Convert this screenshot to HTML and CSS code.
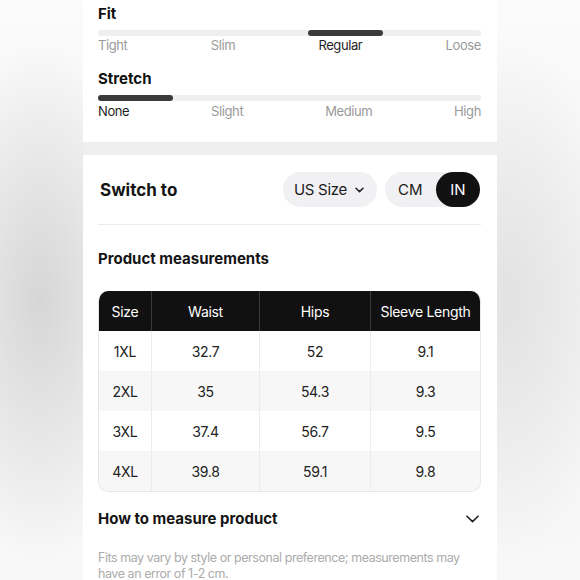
FILE: index.html
```html
<!DOCTYPE html>
<html lang="en">
<head>
<meta charset="utf-8">
<title>Size guide</title>
<link rel="stylesheet" href="styles.css">
</head>
<body>
<div class="panel">
  <section class="attrs">
    <div class="attr">
      <h3 class="attr-title">Fit</h3>
      <div class="track"><div class="track-fill" style="margin-left:54.8%;width:19.6%"></div></div>
      <div class="scale"><span>Tight</span><span>Slim</span><span class="on">Regular</span><span>Loose</span></div>
    </div>
    <div class="attr attr-second">
      <h3 class="attr-title">Stretch</h3>
      <div class="track"><div class="track-fill" style="margin-left:0;width:19.6%"></div></div>
      <div class="scale"><span class="on">None</span><span>Slight</span><span>Medium</span><span>High</span></div>
    </div>
  </section>
  <div class="strip"></div>
  <section class="card">
    <div class="switch-row">
      <h2 class="switch-title">Switch to</h2>
      <div class="controls">
        <button class="pill select">US Size
          <svg class="caret" width="9" height="6" viewBox="0 0 9 6"><path d="M1 1.2 L4.5 4.6 L8 1.2" fill="none" stroke="#222" stroke-width="1.5" stroke-linecap="round" stroke-linejoin="round"/></svg>
        </button>
        <div class="toggle">
          <span class="opt">CM</span>
          <span class="opt active">IN</span>
        </div>
      </div>
    </div>
    <div class="divider"></div>
    <h3 class="sub-title">Product measurements</h3>
    <div class="table">
      <div class="th">Size</div><div class="th">Waist</div><div class="th">Hips</div><div class="th">Sleeve Length</div>
      <div class="td">1XL</div><div class="td">32.7</div><div class="td">52</div><div class="td">9.1</div>
      <div class="td alt">2XL</div><div class="td alt">35</div><div class="td alt">54.3</div><div class="td alt">9.3</div>
      <div class="td">3XL</div><div class="td">37.4</div><div class="td">56.7</div><div class="td">9.5</div>
      <div class="td alt">4XL</div><div class="td alt">39.8</div><div class="td alt">59.1</div><div class="td alt">9.8</div>
    </div>
    <div class="measure-row">
      <h3 class="sub-title">How to measure product</h3>
      <svg class="chev" width="13" height="8" viewBox="0 0 13 8"><path d="M1 1.2 L6.5 6.6 L12 1.2" fill="none" stroke="#222" stroke-width="1.6" stroke-linecap="round" stroke-linejoin="round"/></svg>
    </div>
    <p class="note">Fits may vary by style or personal preference; measurements may have an error of 1-2 cm.</p>
  </section>
</div>
</body>
</html>
```

FILE: styles.css
```css
* { box-sizing: border-box; }

html, body {
  margin: 0;
  padding: 0;
  height: 100%;
}

body {
  font-family: Inter, "Noto Sans", "Liberation Sans", sans-serif;
  color: #1a1a1a;
  overflow: hidden;
  background:
    radial-gradient(ellipse 110px 260px at 40px 300px, #d6d6d6 0%, rgba(214,214,214,0) 100%),
    radial-gradient(ellipse 110px 260px at 510px 300px, #e2e2e2 0%, rgba(226,226,226,0) 100%),
    linear-gradient(#fbfbfb, #f3f3f3 50%, #f8f8f8);
}

.panel {
  width: 414px;
  margin: 0 auto;
  background: #fff;
  min-height: 100%;
}

.attrs {
  padding: 4px 16px 23px 15px;
}

.attr-title {
  margin: 0;
  font-size: 15px;
  line-height: 20px;
  font-weight: 700;
  color: #111;
}

.attr-second { margin-top: 16px; }

.track {
  margin-top: 6px;
  height: 6px;
  border-radius: 3px;
  background: #efeff1;
  display: flex;
}

.track-fill {
  height: 6px;
  border-radius: 3px;
  background: #3a3a3c;
}

.scale {
  margin-top: 1px;
  display: flex;
  justify-content: space-between;
  font-size: 13px;
  line-height: 16px;
  letter-spacing: -0.4px;
  color: #9a9a9a;
}

.attr-second .scale { margin-top: 2px; }

.scale .on { color: #1f1f1f; }

.strip {
  height: 13px;
  background: #efefef;
}

.card {
  padding: 17px 16px 0 15px;
}

.switch-row {
  display: flex;
  align-items: center;
  justify-content: space-between;
}

.switch-title {
  margin: 0 0 0 2px;
  font-size: 17px;
  font-weight: 700;
  color: #151515;
}

.controls {
  display: flex;
  gap: 8px;
  margin-right: 1px;
}

.pill {
  font-family: inherit;
  border: 0;
  background: #f1f1f3;
  height: 35px;
  border-radius: 18px;
  font-size: 15px;
  letter-spacing: -0.3px;
  white-space: nowrap;
  color: #1c1c1c;
  padding: 0 13px 0 11px;
  display: flex;
  align-items: center;
  gap: 8px;
  width: 94px;
}

.toggle {
  display: flex;
  align-items: center;
  background: #f1f1f3;
  height: 35px;
  border-radius: 18px;
  width: 95px;
  padding-left: 13px;
  justify-content: space-between;
}

.opt {
  font-size: 15px;
  color: #1c1c1c;
}

.opt.active {
  background: #111;
  color: #fff;
  width: 44px;
  height: 35px;
  border-radius: 18px;
  display: flex;
  align-items: center;
  justify-content: center;
}

.divider {
  height: 1px;
  background: #ececec;
  margin-top: 17px;
}

.sub-title {
  margin: 0;
  font-size: 15px;
  line-height: 20px;
  font-weight: 700;
  color: #151515;
}

.divider + .sub-title { margin-top: 24px; }

.table {
  margin-top: 22px;
  display: grid;
  grid-template-columns: 52px 108px 111px 1fr;
  border: 1px solid #e6e6e6;
  border-top: 0;
  border-radius: 10px;
  overflow: hidden;
}

.th, .td {
  height: 40px;
  display: flex;
  align-items: center;
  justify-content: center;
  font-size: 14px;
  letter-spacing: -0.3px;
  white-space: nowrap;
}

.th {
  background: #111;
  color: #fff;
  border-left: 1px solid #3a3a3a;
}

.td {
  background: #fff;
  color: #222;
  border-left: 1px solid #ececec;
}

.td.alt { background: #f7f7f7; }

.th:nth-child(4n+1), .td:nth-child(4n+1) { border-left: 0; }

.measure-row {
  margin-top: 17px;
  display: flex;
  align-items: center;
  justify-content: space-between;
}

.chev { margin-right: 2px; }

.note {
  margin: 21px 0 0 0;
  font-size: 12.5px;
  line-height: 16px;
  letter-spacing: -0.45px;
  color: #ababab;
}
```
